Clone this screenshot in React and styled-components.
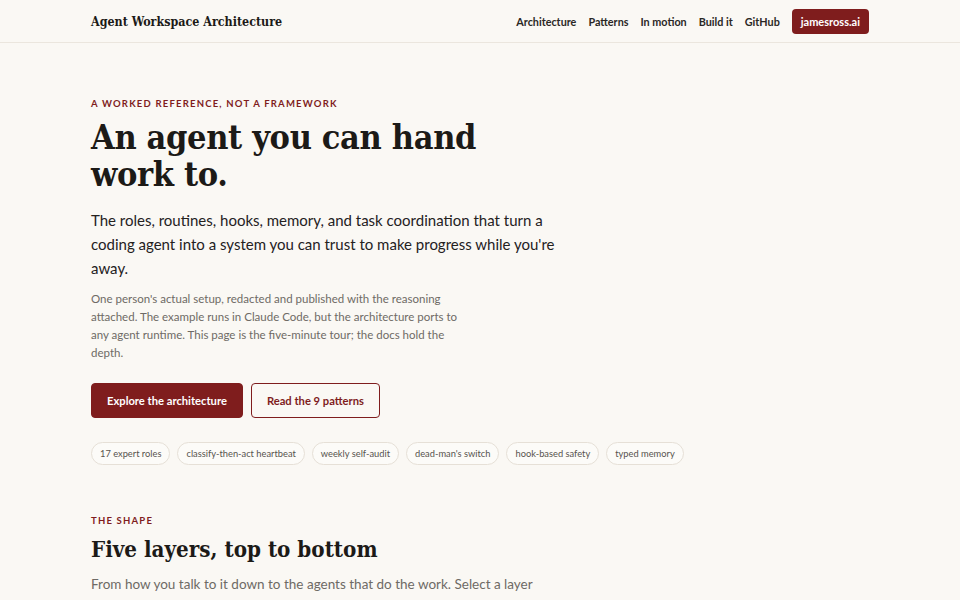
import React from "react";
import styled, { createGlobalStyle } from "styled-components";

const GlobalStyle = createGlobalStyle`
  * { box-sizing: border-box; }
  html, body { margin: 0; padding: 0; }
  body {
    background: #faf8f4;
    color: #1c1a17;
    font-family: Lato, "Noto Sans", sans-serif;
  }
`;

const serif = `"DejaVu Serif Condensed", "DejaVu Serif", Georgia, serif`;
const maroon = "#7f1d1d";

const TopBar = styled.header`
  border-bottom: 1px solid #ebe6de;
  background: #faf8f4;
`;

const Wrap = styled.div`
  max-width: 778px;
  margin: 0 auto;
`;

const BarInner = styled(Wrap)`
  height: 42px;
  display: flex;
  align-items: center;
  justify-content: space-between;
`;

const Brand = styled.div`
  font-family: ${serif};
  font-weight: 700;
  font-size: 12.4px;
  color: #1c1a17;
`;

const Nav = styled.nav`
  display: flex;
  align-items: center;
  gap: 12px;
`;

const NavLink = styled.a`
  font-size: 10.8px;
  font-weight: 700;
  color: #2a2724;
  text-decoration: none;
`;

const SiteButton = styled.a`
  background: ${maroon};
  color: #fff;
  font-size: 11px;
  font-weight: 700;
  height: 25px;
  display: inline-flex;
  align-items: center;
  padding: 0 9px;
  border-radius: 4px;
  text-decoration: none;
`;

const Hero = styled(Wrap)`
  padding-top: 55px;
`;

const Eyebrow = styled.div`
  font-size: 9.5px;
  font-weight: 700;
  letter-spacing: 1.2px;
  text-transform: uppercase;
  color: ${maroon};
`;

const Title = styled.h1`
  font-family: ${serif};
  font-weight: 700;
  font-size: 34px;
  line-height: 37px;
  letter-spacing: -0.35px;
  margin: 10px 0 0;
  max-width: 420px;
`;

const Lead = styled.p`
  font-size: 15px;
  line-height: 24px;
  color: #24211e;
  margin: 15px 0 0;
  max-width: 490px;
`;

const Note = styled.p`
  font-size: 11.5px;
  line-height: 18px;
  color: #6e6a65;
  margin: 10px 0 0;
  max-width: 384px;
`;

const Actions = styled.div`
  display: flex;
  gap: 8px;
  margin-top: 21px;
`;

const Button = styled.a`
  display: inline-flex;
  align-items: center;
  height: 35px;
  padding: 0 15px;
  border-radius: 4px;
  font-size: 11.2px;
  font-weight: 700;
  text-decoration: none;
  border: 1px solid ${maroon};
  background: ${(p) => (p.$primary ? maroon : "transparent")};
  color: ${(p) => (p.$primary ? "#fff" : maroon)};
`;

const Chips = styled.ul`
  list-style: none;
  padding: 0;
  margin: 24px 0 0;
  display: flex;
  flex-wrap: wrap;
  gap: 7px;
`;

const Chip = styled.li`
  height: 23px;
  display: inline-flex;
  align-items: center;
  padding: 0 8px;
  border: 1px solid #e6e0d7;
  border-radius: 999px;
  background: #fcfbf8;
  font-size: 9.3px;
  color: #57534e;
`;

const Section = styled(Wrap)`
  padding-top: 50px;
`;

const SectionTitle = styled.h2`
  font-family: ${serif};
  font-weight: 700;
  font-size: 22.2px;
  line-height: 30px;
  margin: 8px 0 0;
`;

const SectionLead = styled.p`
  font-size: 13.5px;
  line-height: 24px;
  color: #6e6a65;
  margin: 8px 0 0;
  max-width: 452px;
`;

const chips = [
  "17 expert roles",
  "classify-then-act heartbeat",
  "weekly self-audit",
  "dead-man's switch",
  "hook-based safety",
  "typed memory",
];

export default function App() {
  return (
    <>
      <GlobalStyle />
      <TopBar>
        <BarInner>
          <Brand>Agent Workspace Architecture</Brand>
          <Nav>
            <NavLink href="#">Architecture</NavLink>
            <NavLink href="#">Patterns</NavLink>
            <NavLink href="#">In motion</NavLink>
            <NavLink href="#">Build it</NavLink>
            <NavLink href="#">GitHub</NavLink>
            <SiteButton href="#">jamesross.ai</SiteButton>
          </Nav>
        </BarInner>
      </TopBar>
      <Hero>
        <Eyebrow>A worked reference, not a framework</Eyebrow>
        <Title>An agent you can hand work to.</Title>
        <Lead>
          The roles, routines, hooks, memory, and task coordination that turn a
          coding agent into a system you can trust to make progress while you're
          away.
        </Lead>
        <Note>
          One person's actual setup, redacted and published with the reasoning
          attached. The example runs in Claude Code, but the architecture ports
          to any agent runtime. This page is the five-minute tour; the docs hold
          the depth.
        </Note>
        <Actions>
          <Button $primary href="#">Explore the architecture</Button>
          <Button href="#">Read the 9 patterns</Button>
        </Actions>
        <Chips>
          {chips.map((c) => (
            <Chip key={c}>{c}</Chip>
          ))}
        </Chips>
      </Hero>
      <Section>
        <Eyebrow>The shape</Eyebrow>
        <SectionTitle>Five layers, top to bottom</SectionTitle>
        <SectionLead>
          From how you talk to it down to the agents that do the work. Select a
          layer to see what lives there.
        </SectionLead>
      </Section>
    </>
  );
}
